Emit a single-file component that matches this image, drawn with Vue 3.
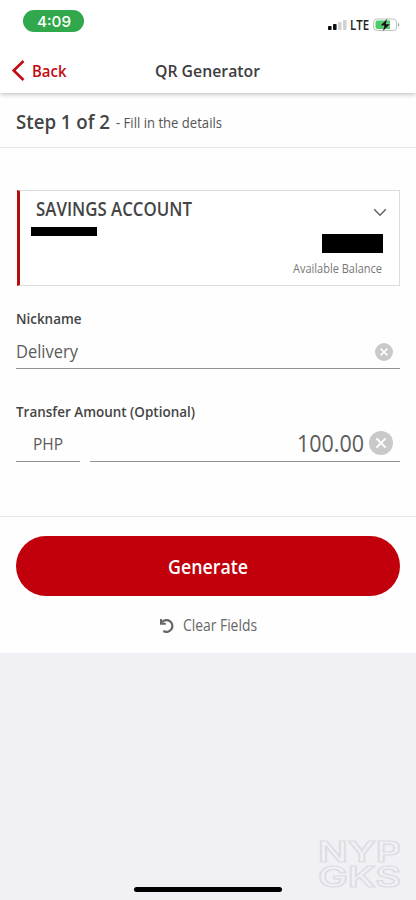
<script setup>
import { h } from 'vue'

// Condensed label: the glyphs are fitted to `width`, capitals are centred on the box.
const FitText = (props) =>
  h('svg', { class: 'fit', width: props.width, height: props.size }, [
    h('text', {
      x: 0,
      y: props.size * 0.857,
      'font-size': props.size,
      textLength: props.width,
      lengthAdjust: 'spacingAndGlyphs',
    }, props.text),
  ])
FitText.props = ['text', 'width', 'size']
</script>

<template>
  <main class="screen">
    <header class="top">
      <div class="status">
        <span class="clock"><FitText text="4:09" :width="34" :size="15" /></span>
        <div class="signals">
          <svg width="19" height="10" viewBox="0 0 19 10">
            <rect x="0" y="6" width="3.6" height="4" rx=".7" fill="#111" />
            <rect x="5" y="4" width="3.6" height="6" rx=".7" fill="#111" />
            <rect x="10" y="2" width="3.6" height="8" rx=".7" fill="#d2d2d2" />
            <rect x="15" y="0" width="3.6" height="10" rx=".7" fill="#d2d2d2" />
          </svg>
          <FitText class="lte" text="LTE" :width="19" :size="13.5" />
          <svg width="27" height="14" viewBox="0 0 27 14">
            <rect x=".6" y="1" width="23" height="11.6" rx="3.6" fill="#fff" stroke="#b9c3bb" />
            <path d="M4.5 2.5H17V11H4.5a2 2 0 0 1-2-2V4.500a2 2 0 0 1 2-2z" fill="#47ce6b" />
            <path d="M25 4.800v4c1.600-.7 1.600-3.300 0-4z" fill="#999" />
            <path d="M14.400 .4 7 7.700h4.200L9.600 13.400 17.300 6H13z" fill="#111" stroke="#fff" stroke-width=".3" />
          </svg>
        </div>
      </div>
      <nav class="nav">
        <a class="back">
          <svg width="14" height="21" viewBox="0 0 14 21">
            <path d="M12.500 1 2.700 10.500 12.500 20" fill="none" stroke="#c20a12" stroke-width="2.600" />
          </svg>
          <FitText text="Back" :width="34.5" :size="17" />
        </a>
        <FitText class="title" text="QR Generator" :width="105" :size="17" />
      </nav>
    </header>

    <section class="step">
      <FitText class="semi" text="Step 1 of 2" :width="94" :size="19.5" />
      <FitText class="hint" text="- Fill in the details" :width="106" :size="14.5" />
    </section>

    <section class="form">
      <div class="card">
        <div class="account">
          <FitText class="semi" text="SAVINGS ACCOUNT" :width="156" :size="19" />
          <svg class="chevron" width="14" height="9" viewBox="0 0 14 9">
            <path d="M1.200 1.200 7 7.200l5.800-6" fill="none" stroke="#666" stroke-width="1.600" />
          </svg>
        </div>
        <div class="number"></div>
        <div class="amount"></div>
        <FitText class="available" text="Available Balance" :width="89" :size="12.5" />
      </div>

      <div class="field">
        <FitText class="semi" text="Nickname" :width="65.5" :size="15" />
        <div class="line nick">
          <FitText class="value" text="Delivery" :width="62" :size="18" />
          <svg width="18" height="18" viewBox="0 0 18 18">
            <circle cx="9" cy="9" r="9" fill="#c9c9c9" />
            <path d="m5.600 5.600 6.800 6.800m0-6.800-6.800 6.800" stroke="#fff" stroke-width="1.700" />
          </svg>
        </div>
      </div>

      <div class="field transfer">
        <FitText class="semi" text="Transfer Amount (Optional)" :width="179" :size="15" />
        <div class="money">
          <div class="line currency"><FitText class="value" text="PHP" :width="30" :size="17" /></div>
          <div class="line sum">
            <FitText class="value" text="100.00" :width="67" :size="23" />
            <svg width="24" height="24" viewBox="0 0 24 24">
              <circle cx="12" cy="12" r="12" fill="#c9c9c9" />
              <path d="m7.400 7.400 9.200 9.200m0-9.200-9.200 9.200" stroke="#fff" stroke-width="2" />
            </svg>
          </div>
        </div>
      </div>
    </section>

    <section class="actions">
      <button class="generate"><FitText text="Generate" :width="80" :size="20" /></button>
      <a class="clear">
        <svg width="16" height="16" viewBox="0 0 16 16">
          <path d="M3 4.200A5.900 5.900 0 1 1 4.300 13" fill="none" stroke="#666" stroke-width="2.200" />
          <path d="M1 1V6.800H6.800V4.800H3V1z" fill="#666" />
        </svg>
        <FitText text="Clear Fields" :width="74" :size="15.5" />
      </a>
    </section>

    <footer class="bottom">
      <svg class="mark" width="84" height="47" viewBox="0 0 84 47">
        <text font-size="28">
          <tspan x="0" y="21" textLength="83" lengthAdjust="spacingAndGlyphs">NYP</tspan>
          <tspan x="0" y="45.500" textLength="83" lengthAdjust="spacingAndGlyphs">GKS</tspan>
        </text>
      </svg>
      <div class="home"></div>
    </footer>
  </main>
</template>

<style>
body {
  margin: 0;
}
svg {
  display: block;
  flex: none;
}
svg.fit {
  overflow: visible;
  fill: currentColor;
}
</style>

<style scoped>
.screen {
  width: 416px;
  height: 900px;
  display: flex;
  flex-direction: column;
  overflow: hidden;
  background: #fefefe;
  color: #444;
  font-family: "Open Sans", "Noto Sans", sans-serif;
}
.top {
  height: 93px;
  box-sizing: border-box;
  padding-top: 10px;
  background: #fff;
  box-shadow: 0 1px 5px rgba(0, 0, 0, .28);
}
.status {
  display: flex;
  justify-content: space-between;
  padding: 0 16px 0 23px;
}
.clock {
  width: 61px;
  height: 22px;
  display: flex;
  align-items: center;
  justify-content: center;
  border-radius: 11px;
  background: #30a84b;
  color: #fff;
  font-family: Inter, sans-serif;
  font-weight: 500;
}
.signals {
  display: flex;
  align-items: center;
  padding-top: 8px;
}
.lte {
  margin: 0 4px 0 3px;
  color: #222;
  font-weight: 600;
}
.nav {
  display: grid;
  grid-template-columns: 144px 1fr;
  align-items: center;
  height: 21px;
  margin-top: 28px;
  padding-left: 11px;
}
.back {
  display: flex;
  align-items: center;
  gap: 7px;
  color: #c20a12;
  font-weight: 600;
}
.title {
  color: #3d3d3d;
  font-weight: 600;
}
.semi {
  font-weight: 600;
}
.step {
  display: flex;
  align-items: center;
  gap: 6px;
  height: 55px;
  padding: 3px 0 0 16px;
  box-sizing: border-box;
  border-bottom: 1px solid #e6e6e6;
}
.step .hint {
  margin-top: 3px;
  color: #555;
}
.form {
  height: 369px;
  box-sizing: border-box;
  padding: 42px 16px 0;
  border-bottom: 1px solid #e6e6e6;
}
.card {
  height: 96px;
  box-sizing: border-box;
  display: flex;
  flex-direction: column;
  margin-left: 1px;
  border: 1px solid #dcdcdc;
  border-left: 3px solid #b50d10;
  padding: 9px 16px 0 11px;
  background: #fff;
}
.account {
  display: flex;
  align-items: center;
  justify-content: space-between;
  padding-left: 5px;
}
.chevron {
  margin: 5px -4px 0 0;
}
.number {
  width: 66px;
  height: 9px;
  margin-top: 8px;
  background: #000;
}
.amount {
  width: 61px;
  height: 19px;
  margin-top: -2px;
  align-self: flex-end;
  background: #000;
}
.available {
  align-self: flex-end;
  margin: 9px 1px 0 0;
  color: #777;
}
.field {
  padding-top: 26px;
}
.field > .semi {
  margin-top: -1px;
}
.field > .semi,
.nick .value {
  margin-left: -.5px;
}
.line {
  display: flex;
  align-items: center;
  box-sizing: border-box;
  border-bottom: 1px solid #929292;
}
.value {
  color: #5c5c5c;
}
.nick {
  justify-content: space-between;
  height: 36px;
  margin-top: 7px;
  padding: 2px 7px 0 0;
}
.transfer {
  padding-top: 36px;
}
.money {
  display: grid;
  grid-template-columns: 64px 1fr;
  gap: 10px;
  height: 39px;
  margin-top: 4px;
}
.currency {
  justify-content: center;
  padding-top: 2px;
}
.sum {
  justify-content: flex-end;
  gap: 5px;
  padding: 2px 7px 0 0;
}
.sum .value {
  margin-top: 1px;
}
.actions {
  height: 136px;
  box-sizing: border-box;
  padding: 19.4px 16px 0;
}
.generate {
  display: flex;
  align-items: center;
  justify-content: center;
  width: 100%;
  height: 60px;
  border: 0;
  border-radius: 30px;
  padding: 1px 0 0;
  background: #c1000b;
  color: #fff;
  font-family: inherit;
  font-weight: 600;
}
.clear {
  display: flex;
  align-items: center;
  justify-content: center;
  gap: 8px;
  margin-top: 21.6px;
  color: #666;
  font-weight: 500;
}
.bottom {
  flex: 1;
  display: flex;
  flex-direction: column;
  justify-content: flex-end;
  align-items: center;
  background: #f0f0f5;
}
.mark {
  align-self: flex-end;
  margin: 0 14px -1px 0;
  fill: none;
  font-family: Inter, sans-serif;
  font-weight: 600;
  stroke: #dcdce1;
  stroke-width: 1.2px;
  overflow: visible;
}
.home {
  width: 148px;
  height: 5px;
  margin-bottom: 8px;
  border-radius: 3px;
  background: #000;
}
</style>
